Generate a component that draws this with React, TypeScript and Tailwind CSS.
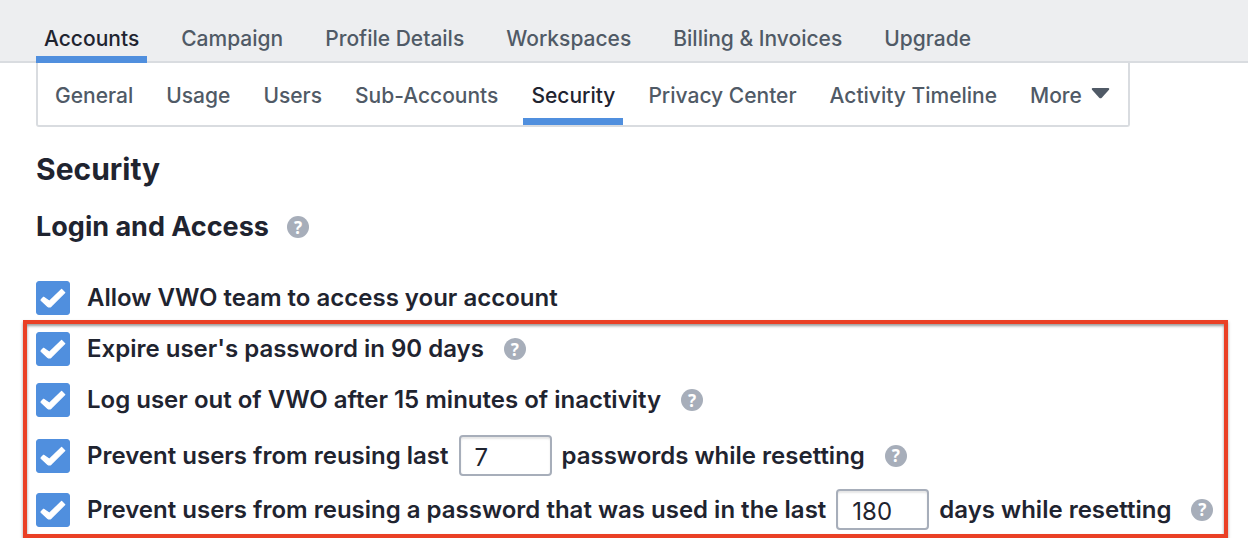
import type { ReactNode } from "react";

const mainTabs = ["Accounts", "Campaign", "Profile Details", "Workspaces", "Billing & Invoices", "Upgrade"];
const subTabs = ["General", "Usage", "Users", "Sub-Accounts", "Security", "Privacy Center", "Activity Timeline"];

function Help({ topic }: { topic: string }) {
  return (
    <button
      type="button"
      aria-label={`Help: ${topic}`}
      className="flex size-[22px] shrink-0 items-center justify-center rounded-full bg-[#a7aeba] font-['Noto_Sans','Open_Sans',sans-serif] text-[17px] leading-none font-bold text-white"
    >
      ?
    </button>
  );
}

function Check({ id }: { id: string }) {
  return (
    <span className="grid size-[34px] shrink-0">
      <input
        id={id}
        type="checkbox"
        defaultChecked
        className="peer col-start-1 row-start-1 size-full appearance-none rounded-[3px] border border-[#a7aeba] bg-white checked:border-[#508fde] checked:bg-[#508fde]"
      />
      <svg
        viewBox="0 0 34 34"
        className="pointer-events-none invisible col-start-1 row-start-1 size-full peer-checked:visible"
        aria-hidden="true"
      >
        <path
          d="M5.2 18.6 L7.6 16.3 L13.4 20.2 L25.6 8.5 L28.8 11.6 L15.2 25.2 Q13.4 26.6 11.6 25.2 L5.4 19.6 Q4.8 19 5.2 18.6 Z"
          fill="#fff"
          stroke="#fff"
          strokeWidth="1.2"
          strokeLinejoin="round"
        />
      </svg>
    </span>
  );
}

function NumberBox({ label, value }: { label: string; value: string }) {
  return (
    <input
      aria-label={label}
      defaultValue={value}
      inputMode="numeric"
      className="mx-2.5 h-[41px] w-[93px] rounded-[4px] border-2 border-[#a7aeba] bg-white px-3.5 pt-[3px] text-2xl font-normal text-[#1f2430] shadow-[inset_0_2px_2px_rgba(0,0,0,0.1)]"
    />
  );
}

function Row({ id, children, help }: { id: string; children: ReactNode; help?: string }) {
  return (
    <div className="flex items-center whitespace-nowrap">
      <Check id={id} />
      <div className="ml-[17px] flex items-center text-2xl leading-[34px] font-semibold">{children}</div>
      {help && (
        <span className="ml-5">
          <Help topic={help} />
        </span>
      )}
    </div>
  );
}

export default function App() {
  return (
    <div className="bg-white font-['Inter','Liberation_Sans',sans-serif] text-[#1f2430]">
      <header className="border-b-2 border-[#d9dce0] bg-[#edeef0] pl-9">
        <nav aria-label="Settings" className="-mb-0.5 flex gap-[26px] pt-4 text-[21px] whitespace-nowrap">
          {mainTabs.map((tab) => (
            <a
              key={tab}
              href="#"
              className={
                tab === "Accounts"
                  ? "border-b-[7px] border-[#508fde] px-2 pt-2 pb-0.5 leading-[30px] font-medium"
                  : "border-b-[7px] border-transparent px-2 pt-2 pb-0.5 leading-[30px] font-medium text-[#505a66]"
              }
            >
              {tab}
            </a>
          ))}
        </nav>
      </header>

      <main className="pr-5 pl-9">
        <nav
          aria-label="Account"
          className="flex w-fit gap-[17px] rounded-b-[3px] border-x-2 border-b-2 border-[#d9dce0] pr-[18px] pl-[9px] text-[21px] whitespace-nowrap"
        >
          {subTabs.map((tab) => (
            <a
              key={tab}
              href="#"
              className={
                tab === "Security"
                  ? "border-b-[7px] border-[#508fde] px-2 pt-[18px] pb-[7px] leading-[30px] font-medium"
                  : "border-b-[7px] border-transparent px-2 pt-[18px] pb-[7px] leading-[30px] font-medium text-[#505a66]"
              }
            >
              {tab}
            </a>
          ))}
          <button type="button" className="flex items-center gap-[9px] pt-[18px] pb-[14px] pl-2 leading-[30px] font-medium text-[#505a66]">
            More
            <svg viewBox="0 0 18 11" className="mb-1.5 h-[11px] w-[19px]" aria-hidden="true">
              <path d="M1 0 H17 Q18.4 .5 17.5 1.7 L10.3 9.7 Q9 10.8 7.7 9.7 L.5 1.7 Q-.4 .5 1 0 Z" fill="currentColor" />
            </svg>
          </button>
        </nav>

        <h1 className="mt-6 text-3xl leading-9 font-bold">Security</h1>
        <div className="mt-[22px] flex items-center gap-[18px]">
          <h2 className="text-[27px] leading-9 font-bold">Login and Access</h2>
          <Help topic="Login and Access" />
        </div>

        <div className="mt-9">
          <Row id="team">
            <label htmlFor="team">Allow VWO team to access your account</label>
          </Row>
        </div>

        <div className="mt-[5px] -ml-[13px] flex flex-col border-4 border-[#ea4025] pt-2 pb-1 pl-[9px] shadow-[0_2px_3px_rgba(0,0,0,0.35),inset_0_2px_3px_rgba(0,0,0,0.4)]">
          <Row id="expire" help="Expire password">
            <label htmlFor="expire">Expire user's password in 90 days</label>
          </Row>
          <div className="mt-[17px]">
            <Row id="logout" help="Inactivity logout">
              <label htmlFor="logout">Log user out of VWO after 15 minutes of inactivity</label>
            </Row>
          </div>
          <div className="mt-[18px]">
            <Row id="reuse" help="Password reuse">
              <label htmlFor="reuse">Prevent users from reusing last</label>
              <NumberBox label="Number of passwords" value="7" />
              <span>passwords while resetting</span>
            </Row>
          </div>
          <div className="mt-[13px]">
            <Row id="age" help="Password age">
              <label htmlFor="age">Prevent users from reusing a password that was used in the last</label>
              <NumberBox label="Number of days" value="180" />
              <span>days while resetting</span>
            </Row>
          </div>
        </div>
      </main>
    </div>
  );
}
